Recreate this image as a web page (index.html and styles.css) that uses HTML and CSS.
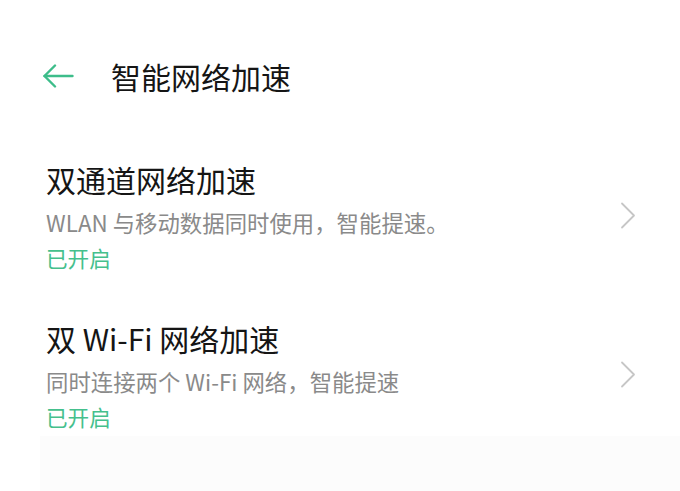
FILE: index.html
```html
<!DOCTYPE html>
<html lang="zh-CN">
<head>
    <meta charset="UTF-8">
    <meta name="viewport" content="width=device-width, initial-scale=1.0">
    <title>智能网络加速</title>
    <link rel="stylesheet" href="styles.css">
</head>
<body>
    <div class="header">
        <svg class="back-icon" width="32" height="24" viewBox="0 0 32 24">
            <polyline points="13,1.5 2.5,12 13,22.5" fill="none" stroke="#3dbd8a" stroke-width="2.4" stroke-linecap="round" stroke-linejoin="round"/>
            <line x1="2.5" y1="12" x2="30.5" y2="12" stroke="#3dbd8a" stroke-width="2.4" stroke-linecap="round"/>
        </svg>
        <span class="header-title">智能网络加速</span>
    </div>

    <div class="list">
        <div class="list-item">
            <div class="item-text">
                <div class="item-title">双通道网络加速</div>
                <div class="item-desc">WLAN 与移动数据同时使用，智能提速。</div>
                <div class="item-status">已开启</div>
            </div>
            <svg class="chevron" width="16" height="27" viewBox="0 0 16 27">
                <polyline points="2,1.5 14,13.5 2,25.5" fill="none" stroke="#c6c6c6" stroke-width="1.8" stroke-linecap="round" stroke-linejoin="round"/>
            </svg>
        </div>
        <div class="list-item second">
            <div class="item-text">
                <div class="item-title">双 Wi-Fi 网络加速</div>
                <div class="item-desc">同时连接两个 Wi-Fi 网络，智能提速</div>
                <div class="item-status">已开启</div>
            </div>
            <svg class="chevron" width="16" height="27" viewBox="0 0 16 27">
                <polyline points="2,1.5 14,13.5 2,25.5" fill="none" stroke="#c6c6c6" stroke-width="1.8" stroke-linecap="round" stroke-linejoin="round"/>
            </svg>
        </div>
    </div>

    <div class="bottom-band"></div>
</body>
</html>
```

FILE: styles.css
```css
html, body {
    height: 100%;
}
body {
    margin: 0;
    background-color: #ffffff;
    font-family: "Noto Sans CJK SC", "Noto Sans", sans-serif;
    display: flex;
    flex-direction: column;
    overflow: hidden;
}
.header {
    display: flex;
    align-items: center;
    height: 42px;
    margin-top: 55px;
    padding-left: 42px;
}
.back-icon {
    display: block;
}
.header-title {
    margin-left: 37px;
    font-size: 30px;
    color: #151515;
    line-height: 42px;
}
.list {
    margin-top: 64px;
}
.list-item {
    display: flex;
    align-items: center;
    padding-left: 46px;
    padding-right: 44px;
}
.list-item.second {
    margin-top: 46px;
}
.item-text {
    flex: 1;
}
.item-title {
    font-size: 30px;
    line-height: 36px;
    color: #151515;
}
.item-desc {
    margin-top: 5px;
    font-size: 22.4px;
    line-height: 40px;
    color: #8a8a8a;
}
.item-status {
    font-size: 21.6px;
    line-height: 32px;
    color: #45c08d;
}
.chevron {
    display: block;
    margin-bottom: 4px;
}
.bottom-band {
    flex: 1;
    margin-top: 3px;
    margin-left: 40px;
    background-color: #fcfcfc;
}
```
